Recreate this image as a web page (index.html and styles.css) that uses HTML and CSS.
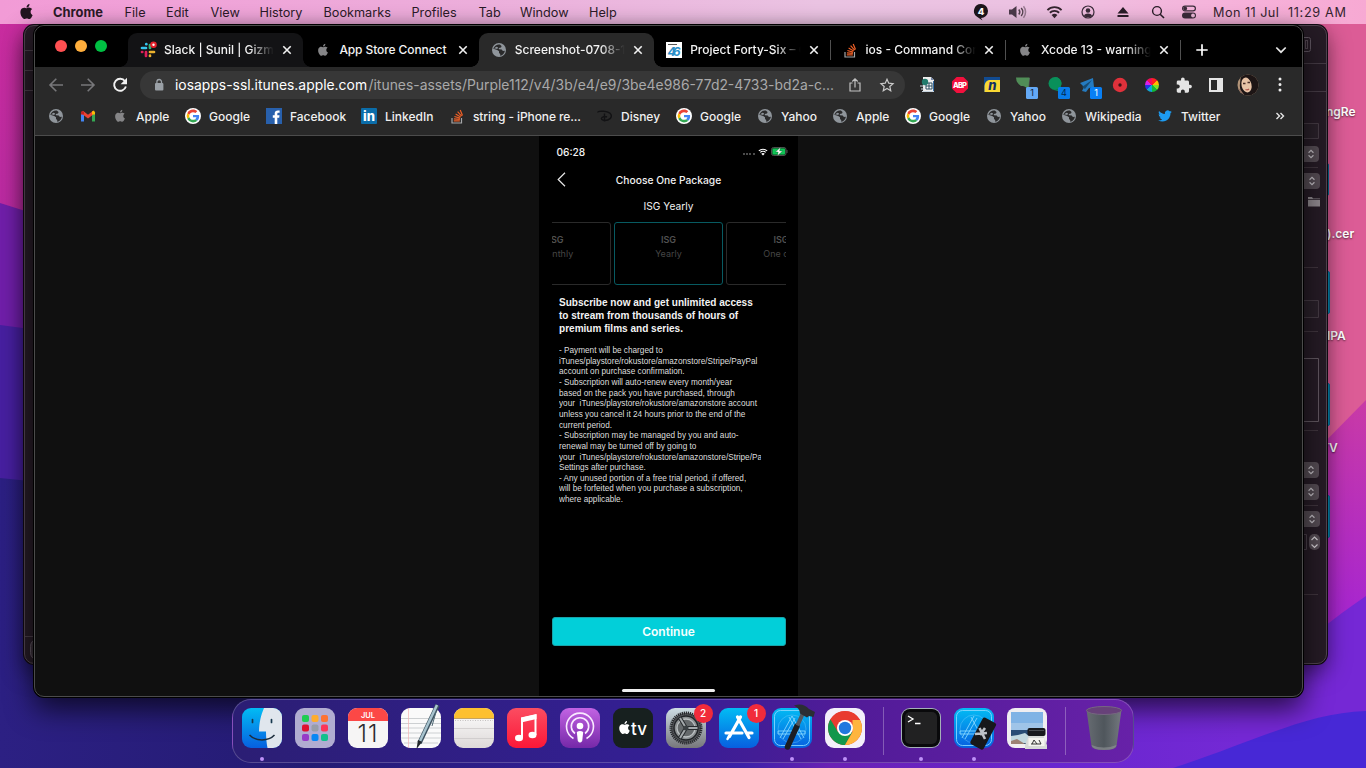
FILE: index.html
```html
<!DOCTYPE html>
<html lang="en">
<head>
<meta charset="utf-8">
<title>Desktop</title>
<link rel="stylesheet" href="styles.css">
</head>
<body>
<svg class="defs" width="0" height="0">
  <defs>
    <linearGradient id="wl" x1="0" y1="0" x2="0" y2="1"><stop offset="0" stop-color="#cb2d9f"/><stop offset="1" stop-color="#8a25a4"/></linearGradient>
    <linearGradient id="wr" x1="0" y1="0" x2="0" y2="1"><stop offset="0" stop-color="#c93aa6"/><stop offset=".55" stop-color="#a927cd"/><stop offset="1" stop-color="#8f25dc"/></linearGradient>
    <linearGradient id="wb" x1="0" y1="0" x2="1" y2="0"><stop offset="0" stop-color="#2c2083"/><stop offset=".25" stop-color="#241b73"/><stop offset=".6" stop-color="#3c21a8"/><stop offset=".67" stop-color="#6a21b4"/><stop offset=".85" stop-color="#6926cf"/><stop offset="1" stop-color="#7429d5"/></linearGradient>
    <linearGradient id="blueApp" x1="0" y1="0" x2="0" y2="1"><stop offset="0" stop-color="#02bcf4"/><stop offset="1" stop-color="#075fe0"/></linearGradient>
    <linearGradient id="redApp" x1="0" y1="0" x2="0" y2="1"><stop offset="0" stop-color="#fb4d61"/><stop offset="1" stop-color="#fc1738"/></linearGradient>
    <linearGradient id="purpleApp" x1="0" y1="0" x2="0" y2="1"><stop offset="0" stop-color="#c263e3"/><stop offset="1" stop-color="#7528a8"/></linearGradient>
    <linearGradient id="greyApp" x1="0" y1="0" x2="0" y2="1"><stop offset="0" stop-color="#cddde4"/><stop offset="1" stop-color="#77777b"/></linearGradient>
    <linearGradient id="paper" x1="0" y1="0" x2="0" y2="1"><stop offset="0" stop-color="#fff"/><stop offset="1" stop-color="#ddd9d8"/></linearGradient>
    <linearGradient id="bin" x1="0" y1="0" x2="1" y2="0"><stop offset="0" stop-color="#676c72"/><stop offset=".5" stop-color="#4f565c"/><stop offset="1" stop-color="#73787e"/></linearGradient>
    <symbol id="apple" viewBox="0 0 24 24"><path fill="currentColor" d="M12.152 6.896c-.948 0-2.415-1.078-3.96-1.04-2.04.027-3.91 1.183-4.961 3.014-2.117 3.675-.546 9.103 1.519 12.09 1.013 1.454 2.208 3.09 3.792 3.039 1.52-.065 2.09-.987 3.935-.987 1.831 0 2.35.987 3.96.948 1.637-.026 2.676-1.48 3.676-2.948 1.156-1.688 1.636-3.325 1.662-3.415-.039-.013-3.182-1.221-3.22-4.857-.026-3.04 2.48-4.494 2.597-4.559-1.429-2.09-3.623-2.324-4.39-2.376-2-.156-3.675 1.09-4.61 1.09zM15.53 3.83c.843-1.012 1.4-2.427 1.245-3.83-1.207.052-2.662.805-3.532 1.818-.78.896-1.454 2.338-1.273 3.714 1.338.104 2.715-.688 3.559-1.701"/></symbol>
    <symbol id="globe" viewBox="0 0 16 16"><circle cx="8" cy="8" r="7" fill="#8f959b"/><path fill="#2a2a2b" d="M8.800 2.600 10.600 4 10 5.600 7.700 6.100 8 7.300l2.700.2 1.200 1.500 2-.2c-.3 2.600-2.200 4.600-4.700 5V12l-1.200-1L8 9.300 6.200 8 2.300 6.800A5.800 5.800 0 0 1 8.800 2.600z"/><path fill="#8f959b" d="M3 6.300 5.500 4.800l1.500.5L6.300 7z"/></symbol>
    <symbol id="google" viewBox="-6 -6 60 60"><circle cx="24" cy="24" r="30" fill="#fff"/><path fill="#EA4335" d="M24 9.500c3.540 0 6.710 1.220 9.210 3.600l6.850-6.850C35.900 2.380 30.470 0 24 0 14.620 0 6.510 5.380 2.560 13.220l7.980 6.190C12.430 13.720 17.740 9.500 24 9.500z"/><path fill="#4285F4" d="M46.980 24.550c0-1.570-.15-3.090-.38-4.550H24v9.020h12.940c-.58 2.960-2.260 5.480-4.780 7.180l7.730 6c4.510-4.180 7.090-10.360 7.090-17.650z"/><path fill="#FBBC05" d="M10.530 28.590A14.500 14.500 0 0 1 10.530 19.410L2.560 13.220A24 24 0 0 0 2.560 34.780z"/><path fill="#34A853" d="M24 48c6.480 0 11.930-2.130 15.890-5.810l-7.730-6c-2.150 1.450-4.920 2.300-8.160 2.300-6.260 0-11.570-4.220-13.470-9.910l-7.970 6.190C6.510 42.620 14.620 48 24 48z"/></symbol>
    <symbol id="stack" viewBox="0 0 16 16"><path d="M3 10v5h9.500v-5" fill="none" stroke="#a6a7a9" stroke-width="1.200"/><path d="M4.800 12.800h6M4.900 10.800l6 .6M5.400 8.500l5.700 1.600M6.600 6l5.100 3M8.600 3.600l4 4.500M11.200 2l2.300 5.400" stroke="#ee5f26" stroke-width="1.200" fill="none"/></symbol>
    <symbol id="close" viewBox="0 0 10 10"><path d="m1.300 1.300 7.400 7.400m0-7.400L1.300 8.700" stroke="#f1f1f1" stroke-width="1.600"/></symbol>
    <symbol id="updown" viewBox="0 0 10 12"><path d="m2.300 4.600 2.700-2.700 2.700 2.700M2.300 7.400 5 10.100l2.700-2.700" fill="none" stroke="#c4bfc5" stroke-width="1.300"/></symbol>
    <symbol id="wifi" viewBox="0 0 18 14"><path d="M1.500 5a10.600 10.600 0 0 1 15 0M4.100 7.800a7 7 0 0 1 9.800 0" fill="none" stroke="currentColor" stroke-width="1.900"/><path d="M9 13.500 5.900 10.300a4.400 4.400 0 0 1 6.200 0z" fill="currentColor"/></symbol>
  </defs>
</svg>

<div class="desktop">
  <svg class="wallpaper" viewBox="0 0 1366 768">
    <rect width="1366" height="768" fill="#dc5c96"/>
    <path d="M0 0h700v768H0z" fill="url(#wl)"/>
    <path d="M0 203 60 222v546H0z" fill="#701fa9"/>
    <path d="M0 325 60 333v435H0z" fill="#4720a0"/>
    <path d="M1366 400 1240 528v240h126z" fill="url(#wr)"/>
    <path d="M1366 596C1300 640 1250 700 1140 720v48h226z" fill="#7528d5"/>
    <path d="M0 478 60 484v180h1180v104H0z" fill="url(#wb)"/>
    <path d="M1366 711c-60 2-110 30-193 57h193z" fill="#4728d6"/>
  </svg>

  <div class="file-label f1">ngRe</div>
  <div class="file-label f2">).cer</div>
  <div class="file-label f3">IPA</div>
  <div class="file-label f4">TV</div>
  <div class="file-icon dim i1"></div>
  <div class="file-icon i2"></div>
  <div class="file-icon i3"></div>
  <div class="file-icon i4"></div>

  <header class="menubar">
    <nav class="menus">
      <svg class="apple-menu"><use href="#apple"/></svg>
      <b>Chrome</b><span>File</span><span>Edit</span><span>View</span><span>History</span><span>Bookmarks</span><span>Profiles</span><span>Tab</span><span>Window</span><span>Help</span>
    </nav>
    <div class="status">
      <svg width="16" height="18" viewBox="0 0 16 18"><path d="M8 1a7 7 0 1 1 0 14l1.500 2.500L4 13.800A7 7 0 0 1 8 1z" fill="#1e171d"/><text x="8" y="11.500" text-anchor="middle" class="icon-text bold" font-size="9.500" fill="#fff">4</text></svg>
      <svg width="20" height="16" viewBox="0 0 20 16"><path d="M1 5.500h3L8.500 2v12L4 10.500H1z" fill="#4c3a4a"/><path d="M10.800 5.500a4 4 0 0 1 0 5M13.200 4a6 6 0 0 1 0 8" stroke="#55434f" stroke-width="1.500" fill="none"/><path d="M15.500 2.300a9 9 0 0 1 0 11.400" stroke="#9b7c93" stroke-width="1.500" fill="none"/></svg>
      <svg width="17" height="14"><use href="#wifi"/></svg>
      <svg width="14" height="14" viewBox="0 0 14 14"><circle cx="7" cy="7" r="6" fill="none" stroke="#3c2c3b" stroke-width="1.200"/><circle cx="7" cy="5.500" r="2.300" fill="#3c2c3b"/><path d="M3 10.700c1-3 7-3 8 0-2 2-6 2-8 0z" fill="#3c2c3b"/></svg>
      <svg width="12" height="12" viewBox="0 0 12 12"><path d="M6 1 11.500 7.500H.5zM.5 9h11v2H.5z" fill="#2a1e29"/></svg>
      <svg width="14" height="14" viewBox="0 0 14 14"><circle cx="6" cy="6" r="4.400" fill="none" stroke="#2a1e29" stroke-width="1.400"/><path d="m9.200 9.200 3.800 3.800" stroke="#2a1e29" stroke-width="1.600"/></svg>
      <svg width="16" height="14" viewBox="0 0 16 14"><rect x="1.600" y="1.100" width="12.800" height="4.800" rx="2.400" fill="none" stroke="#3c2c3b" stroke-width="1.200"/><circle cx="4.200" cy="3.500" r="1.900" fill="#3c2c3b"/><rect x="1" y="7.500" width="14" height="6" rx="3" fill="#3c2c3b"/><circle cx="12" cy="10.500" r="1.900" fill="#edbada"/></svg>
      <span class="date">Mon 11 Jul</span><span class="time">11:29 AM</span>
    </div>
  </header>

  <section class="window back-window">
    <svg class="inspector" width="1301" height="638" viewBox="0 0 1301 638">
      <path d="M0 25.500h10M0 45.500h10M0 65.500h10M0 611.500h10" stroke="#463b46"/>
      <rect x="5.500" y="614.500" width="12" height="20" rx="7" fill="#382f38" stroke="#5b515b"/>
      <path d="M1277 38.500h24M1277 66.500h24" stroke="#443a44"/>
      <rect x="1273" y="12.500" width="12.500" height="14" rx="2" fill="none" stroke="#5e545f"/><rect x="1280.500" y="15.500" width="2" height="8" fill="none" stroke="#51464f"/>
      <path d="M1277 98.500h16.500v15H1277M1277 275.500h16.500v17H1277" fill="#292029" stroke="#443a43"/>
      <path d="M1277 333.500h16.500v63H1277" fill="none" stroke="#60565f"/>
      <path d="M1277 142.500h16M1277 242.500h16M1277 306.500h16M1277 405.500h16M1277 480.500h16M1277 569.500h16" stroke="#3f343d"/>
      <g fill="#544b53"><rect x="1265" y="121" width="29" height="16" rx="4"/><rect x="1265" y="148" width="30" height="16" rx="4"/><rect x="1265" y="437" width="29" height="16" rx="4"/><rect x="1265" y="459" width="29" height="16" rx="4"/><rect x="1265" y="486" width="30" height="16" rx="4"/><rect x="1284" y="509" width="11" height="16" rx="5"/></g>
      <use href="#updown" x="1281.500" y="123.500" width="9" height="11"/><use href="#updown" x="1282.500" y="150.500" width="9" height="11"/><use href="#updown" x="1281.500" y="439.500" width="9" height="11"/><use href="#updown" x="1281.500" y="461.500" width="9" height="11"/><use href="#updown" x="1282.500" y="488.500" width="9" height="11"/>
      <path d="m1286.500 515 3-3 3 3m-6 4.500 3 3 3-3" fill="none" stroke="#d5d0d5" stroke-width="1.200"/><path d="M1278 509.500h3.500v15h-4" fill="none" stroke="#4a404a"/>
      <path d="M1283 172h4l1 1.500h7v8h-12z" fill="#8d868c"/><path d="M1283 174.500h12" stroke="#3b323b"/>
    </svg>
  </section>

  <main class="window browser">
    <div class="tabstrip">
      <div class="lights"><i class="red"></i><i class="amber"></i><i class="green"></i></div>
      <div class="tab hover">
        <svg viewBox="0 0 16 16"><g stroke-width="2.700" stroke-linecap="round"><path d="M2 6h4" stroke="#36c5f0"/><path d="M6.300 2v.2" stroke="#36c5f0"/><path d="M10 3v3" stroke="#2eb67d"/><path d="M10 10h4" stroke="#ecb22e"/><path d="M10 14v-.3" stroke="#ecb22e"/><path d="M6 10v4M2 10h.3" stroke="#e01e5a"/></g><circle cx="13.500" cy="2.800" r="3.300" fill="#e5202b"/><circle cx="13.500" cy="2.800" r="1.200" fill="#fff"/></svg>
        <span>Slack | Sunil | Gizmeon</span><svg class="x"><use href="#close"/></svg></div>
      <div class="tab"><svg class="grey"><use href="#apple" x="2" y="1.500" width="12" height="12.500"/></svg><span class="whole">App Store Connect</span><svg class="x"><use href="#close"/></svg></div>
      <div class="tab active"><svg><use href="#globe"/></svg><span>Screenshot-0708-142</span><svg class="x"><use href="#close"/></svg></div>
      <div class="tab"><svg viewBox="0 0 16 16"><path d="M0 0h16v16H0z" fill="#fff"/><text x="8" y="13.500" text-anchor="middle" class="icon-text" font-size="12" font-style="italic" font-weight="700" fill="#2c8fc9" textLength="13">46</text><path d="M2 2.500h9" stroke="#555"/></svg><span>Project Forty-Six – Core</span><svg class="x"><use href="#close"/></svg></div>
      <div class="tab divided"><svg><use href="#stack"/></svg><span>ios - Command Compile</span><svg class="x"><use href="#close"/></svg></div>
      <div class="tab divided"><svg class="grey"><use href="#apple" x="2" y="1.500" width="12" height="12.500"/></svg><span>Xcode 13 - warning: a</span><svg class="x"><use href="#close"/></svg></div>
      <div class="newtab"><svg width="12" height="12" viewBox="0 0 12 12"><path d="M6 .3v11.400M.3 6h11.400" stroke="#fff" stroke-width="1.700"/></svg></div>
      <svg class="chev" width="12" height="8" viewBox="0 0 12 8"><path d="m1.300 1.500 4.700 4.700 4.700-4.700" fill="none" stroke="#e8e8e8" stroke-width="1.700"/></svg>
    </div>

    <div class="toolbar">
      <div class="nav">
        <svg viewBox="0 0 16 16"><path d="M15 8H2m6.300-6.300L2 8l6.300 6.300" fill="none" stroke="#77777a" stroke-width="1.600"/></svg>
        <svg viewBox="0 0 16 16"><path d="M1 8h13M7.700 1.700 14 8l-6.300 6.300" fill="none" stroke="#77777a" stroke-width="1.600"/></svg>
        <svg viewBox="0 0 16 16"><path d="M13 4.200A6 6 0 1 0 13.900 9.500" fill="none" stroke="#f0f0f0" stroke-width="1.900"/><path d="M15 .8v6.400H8.600z" fill="#f0f0f0"/></svg>
      </div>
      <div class="omnibox">
        <svg class="lock" width="10" height="14" viewBox="0 0 10 14"><rect x="1" y="5" width="8.400" height="7.500" rx="1" fill="#9aa0a6"/><path d="M2.900 5.500V3.800a2.300 2.300 0 0 1 4.600 0v1.700" fill="none" stroke="#9aa0a6" stroke-width="1.300"/></svg>
        <div class="url"><span class="host">iosapps-ssl.itunes.apple.com</span><span class="path">/itunes-assets/Purple112/v4/3b/e4/e9/3be4e986-77d2-4733-bd2a-c...</span></div>
        <svg class="share" width="14" height="16" viewBox="0 0 14 16"><path d="M4.500 6H2v8h10V6H9.500M7 10.500V2M4.300 4.500 7 1.800l2.700 2.700" fill="none" stroke="#c2c2c2" stroke-width="1.200"/></svg>
        <svg class="star" width="14" height="14" viewBox="0 0 14 14"><path d="m7 1.200 1.750 4 4.300.4-3.250 2.850.95 4.250L7 10.450 3.250 12.700l.95-4.250L.95 5.600l4.300-.4z" fill="none" stroke="#c9c9c9" stroke-width="1.200"/></svg>
      </div>
      <div class="extensions">
        <svg viewBox="0 0 24 24"><path d="M7 4h8l3 3v12H7z" fill="#eee"/><path d="M15 4v3h3" fill="#78a"/><path d="M10 10h6v6h-6zM13 10v6M10 13h6" fill="#fff" stroke="#294a5d"/><circle cx="9" cy="9" r="3.200" fill="#227b6d"/><path d="M4 13h4M5 16h3M6 18.500h12" stroke="#c7d3dd"/><path d="M17.500 8v10" stroke="#346ba3"/></svg>
        <svg viewBox="0 0 24 24"><path d="M8.600 4h6.800L20 8.600v6.800L15.400 20H8.600L4 15.400V8.600z" fill="#f2103d"/><text x="12" y="14.800" text-anchor="middle" font-size="7.500" class="icon-text bold" fill="#fff" textLength="14">ABP</text></svg>
        <svg viewBox="0 0 24 24"><path d="M4 4h16v15H4z" fill="#f9d833"/><path d="M4 4h16v3H9Q5 8 4.500 13v6H4z" fill="#114b91"/><text x="12.500" y="17" text-anchor="middle" font-size="13" class="icon-text bold" font-style="italic" fill="#132f66">n</text></svg>
        <svg viewBox="0 0 24 24"><path d="M4 5h14L17 17C16 12 12 7 4 5z" fill="#55585a"/><path d="M4 4.500h13.500L16 18C15 13 11 13 9 13Q4 10 4 4.500z" fill="#508d57"/><rect x="14" y="14" width="12" height="12" rx="1.500" fill="#64a9f5"/><text x="20" y="23" text-anchor="middle" font-size="9" class="icon-text" fill="#123">1</text></svg>
        <svg viewBox="0 0 24 24"><path d="M11 4a6.500 6.500 0 1 1-2 12.700L14 18l2 3-1-7z" fill="#09905a"/><circle cx="11" cy="10.500" r="6.500" fill="#09905a"/><rect x="14" y="14" width="12" height="12" rx="1.500" fill="#087ce9"/><text x="20" y="23" text-anchor="middle" font-size="9" class="icon-text" fill="#03294e">4</text></svg>
        <svg viewBox="0 0 24 24"><path d="M4 10 17 5l1 9-5 1-3 4-4-1 2-4z" fill="#257bc0"/><path d="m6 14 10-7-7 9z" fill="#174b72"/><rect x="14" y="14" width="12" height="12" rx="1.500" fill="#087ff4"/><text x="20" y="23" text-anchor="middle" font-size="9" class="icon-text" fill="#fff">1</text></svg>
        <svg viewBox="0 0 24 24"><circle cx="12" cy="12" r="7.200" fill="#e0313b"/><circle cx="12" cy="12" r="1.700" fill="#421116"/></svg>
        <div class="wheel-wrap"><i class="wheel"></i></div>
        <svg viewBox="0 0 24 24"><path transform="translate(3.300 3.800) scale(.72)" fill="#e4e4e4" d="M20.500 11H19V7c0-1.100-.9-2-2-2h-4V3.500C13 2.120 11.880 1 10.500 1S8 2.120 8 3.500V5H4c-1.100 0-1.990.9-1.990 2v3.800H3.500c1.490 0 2.700 1.210 2.700 2.700s-1.210 2.700-2.700 2.700H2V20c0 1.100.9 2 2 2h3.800v-1.500c0-1.490 1.210-2.700 2.700-2.700s2.700 1.210 2.700 2.700V22H17c1.100 0 2-.9 2-2v-4h1.500c1.380 0 2.500-1.120 2.500-2.500S21.880 11 20.500 11z"/></svg>
        <svg viewBox="0 0 24 24"><path d="M6 6h12v12H6z" fill="none" stroke="#e4e4e4" stroke-width="2"/><path d="M13 6h5v12h-5z" fill="#e4e4e4"/></svg>
        <svg viewBox="0 0 24 24"><clipPath id="av"><circle cx="12" cy="12" r="10.500"/></clipPath><g clip-path="url(#av)"><path d="M0 0h24v24H0z" fill="#b29478"/><path d="M5 0h19v24H3c4-5 0-8 1-13z" fill="#1d1515"/><ellipse cx="10.500" cy="12" rx="5" ry="7.500" fill="#e8c3a6" transform="rotate(-14 10.500 12)"/><path d="M7 10.500h2.500M11.500 9.500h2.500" stroke="#4a2f28" stroke-width="1.300"/><path d="M9.500 16.500q2 .8 3.500-.5" stroke="#b0584f" stroke-width="1.200" fill="none"/><path d="M0 15c5 0 6 5 10 9H0z" fill="#927161"/></g></svg>
        <svg viewBox="0 0 24 24"><path d="M12 6v.1M12 11.500v.1M12 17v.1" stroke="#ededed" stroke-width="3" stroke-linecap="round"/></svg>
      </div>
    </div>

    <nav class="bookmarks">
      <a><svg><use href="#globe"/></svg></a>
      <a><svg viewBox="0 0 16 16"><path d="M2.500 13.500V4.500" stroke="#4285f4" stroke-width="3"/><path d="M13.500 13.500V4.500" stroke="#34a853" stroke-width="3"/><path d="m2 4 6 4.700L14 4" fill="none" stroke="#ea4335" stroke-width="3"/><path d="M12 5.800V3.500L14 2.500l1 2v2h-3z" fill="#fbbc04"/><path d="M1 3.500v3h3v-3z" fill="#c5221f"/></svg></a>
      <a><svg class="grey"><use href="#apple" x="2" y="1.500" width="12" height="12.500"/></svg>Apple</a>
      <a><svg><use href="#google"/></svg>Google</a>
      <a><svg viewBox="0 0 16 16"><path d="M0 0h16v16H0z" fill="#2860ac"/><path d="M8.700 16V9.800H6.800V7.300h1.900V5.500C8.700 3.500 9.900 2.500 12 2.500h1.600v2.300h-1.100c-.9 0-1.200.4-1.200 1.200v1.300h2.200l-.3 2.500h-1.900V16z" fill="#fff"/></svg>Facebook</a>
      <a><svg viewBox="0 0 16 16"><rect width="16" height="16" rx="1" fill="#0b6da9"/><text x="8" y="13" text-anchor="middle" class="icon-text bold" font-size="13" fill="#fff" textLength="12">in</text></svg>LinkedIn</a>
      <a class="tight"><svg><use href="#stack"/></svg>string - iPhone re...</a>
      <a><svg viewBox="0 0 16 16"><path d="M1 4.500c-1-2 11-2 13 2 1.500 3-2 6-6 6-3 0-4.500-1.500-3-3 1.500-1 4-1 5-.5M7.500 5.500v8" fill="none" stroke="#121214" stroke-width="1.400"/></svg>Disney</a>
      <a><svg><use href="#google"/></svg>Google</a>
      <a><svg><use href="#globe"/></svg>Yahoo</a>
      <a><svg><use href="#globe"/></svg>Apple</a>
      <a><svg><use href="#google"/></svg>Google</a>
      <a><svg><use href="#globe"/></svg>Yahoo</a>
      <a><svg><use href="#globe"/></svg>Wikipedia</a>
      <a><svg viewBox="-2 -2 28 28"><path fill="#1d9bf0" d="M23.953 4.570a10 10 0 01-2.825.775 4.958 4.958 0 002.163-2.723c-.951.555-2.005.959-3.127 1.184a4.920 4.920 0 00-8.384 4.482C7.690 8.095 4.067 6.130 1.640 3.162a4.822 4.822 0 00-.666 2.475c0 1.710.870 3.213 2.188 4.096a4.904 4.904 0 01-2.228-.616v.060a4.923 4.923 0 003.946 4.827 4.996 4.996 0 01-2.212.085 4.936 4.936 0 004.604 3.417 9.867 9.867 0 01-6.102 2.105c-.390 0-.779-.023-1.170-.067a13.995 13.995 0 007.557 2.209c9.053 0 13.998-7.496 13.998-13.985 0-.210 0-.420-.015-.630A9.935 9.935 0 0024 4.590z"/></svg>Twitter</a>
      <svg class="more" viewBox="0 0 16 16"><path d="m4.500 5 3 3-3 3M8.500 5l3 3-3 3" fill="none" stroke="#e6e6e6" stroke-width="1.400"/></svg>
    </nav>

    <div class="page">
      <article class="phone">
        <div class="phone-status"><span>06:28</span>
          <div class="signals"><i class="dots"></i><svg width="10" height="8"><use href="#wifi"/></svg>
          <svg width="17" height="9" viewBox="0 0 17 9"><rect x=".5" y=".5" width="14.500" height="8" rx="2" fill="#133a20" stroke="#4a4d4b"/><rect x="1.500" y="1.500" width="12.500" height="6" rx="1" fill="#0fc455"/><path d="M16 3v3" stroke="#555"/><path d="M9.500.3 4.500 5h2.700L6.500 8.700 11.500 4H8.600z" fill="#fff" stroke="#083a18" stroke-width=".3"/></svg></div>
        </div>
        <div class="phone-title"><svg width="9" height="15" viewBox="0 0 9 15"><path d="M8 .8 1.200 7.500 8 14.200" fill="none" stroke="#e8e8e8" stroke-width="1.200"/></svg><h1>Choose One Package</h1></div>
        <h2>ISG Yearly</h2>
        <div class="plans">
          <div class="plan"><b>ISG</b><span>Monthly</span></div>
          <div class="plan selected"><b>ISG</b><span>Yearly</span></div>
          <div class="plan"><b>ISG</b><span>One day</span></div>
        </div>
        <h3>Subscribe now and get unlimited access<br>to stream from thousands of hours of<br>premium films and series.</h3>
        <p class="terms">- Payment will be charged to
iTunes/playstore/rokustore/amazonstore/Stripe/PayPal
account on purchase confirmation.
- Subscription will auto-renew every month/year
based on the pack you have purchased, through
your  iTunes/playstore/rokustore/amazonstore account
unless you cancel it 24 hours prior to the end of the
current period.
- Subscription may be managed by you and auto-
renewal may be turned off by going to
your  iTunes/playstore/rokustore/amazonstore/Stripe/PayPal
Settings after purchase.
- Any unused portion of a free trial period, if offered,
will be forfeited when you purchase a subscription,
where applicable.</p>
        <button class="continue">Continue</button>
        <div class="home"></div>
      </article>
    </div>
  </main>

  <footer class="dock">
    <div class="app running"><svg viewBox="0 0 40 40"><clipPath id="r"><rect width="40" height="40" rx="9"/></clipPath><g clip-path="url(#r)"><path d="M0 0h40v40H0z" fill="url(#blueApp)"/><path d="M22 0h18v40H25.500c-1-5-1.500-10-1.500-16.500h-7C17.300 14 19 7 22 0z" fill="#e0e6ed"/></g><path d="M10.500 11.500v3M29.500 11.500v3" stroke="#16384e" stroke-width="1.700" stroke-linecap="round"/><path d="M7.500 27c6 6.500 19 6.500 25 0" fill="none" stroke="#1c2c3b" stroke-width="1.500"/></svg></div>
    <div class="app"><svg viewBox="0 0 40 40"><rect width="40" height="40" rx="9" fill="#b1acd1"/><g><rect x="7" y="7" width="7" height="7" rx="2" fill="#1fcd52"/><rect x="16.500" y="7" width="7" height="7" rx="2" fill="#ffac2f"/><rect x="26" y="7" width="7" height="7" rx="2" fill="#fd7332"/><rect x="7" y="16.500" width="7" height="7" rx="2" fill="#df1030"/><rect x="16.500" y="16.500" width="7" height="7" rx="2" fill="#989daa"/><rect x="26" y="16.500" width="7" height="7" rx="2" fill="#fb3659"/><rect x="7" y="26" width="7" height="7" rx="2" fill="#963bc8"/><rect x="16.500" y="26" width="7" height="7" rx="2" fill="#0987f4"/><rect x="26" y="26" width="7" height="7" rx="2" fill="#11c08c"/></g></svg></div>
    <div class="app"><svg viewBox="0 0 40 40"><rect width="40" height="40" rx="9" fill="#f6f5f5"/><path d="M0 13V9a9 9 0 0 1 9-9h22a9 9 0 0 1 9 9v4z" fill="#fc4846"/><text x="20" y="9.500" text-anchor="middle" class="icon-text semi" font-size="7.500" fill="#fff" textLength="14">JUL</text><text x="19.500" y="33.500" text-anchor="middle" class="icon-text light" font-size="24" fill="#2d2d2f" textLength="20">11</text></svg></div>
    <div class="app"><svg viewBox="0 0 40 40"><rect width="40" height="40" rx="9" fill="#fafafa"/><path d="M0 10.500h40M0 15.500h40M0 20h40M0 25h40M0 30h40M3 35h34" stroke="#c1c5c8" stroke-width=".8"/><path d="M7.500 0v40" stroke="#f2b5b5" stroke-width=".7"/><path d="M36.500-3 18.500 35" stroke="#3e5361" stroke-width="4.500"/><path d="M36-3 19 33" stroke="#a8c4cf" stroke-width="2.500"/><path d="m17 32-1.500 9 5.500-7z" fill="#22272b"/><path d="M35 4 31 18" stroke="#4e6874"/></svg></div>
    <div class="app"><svg viewBox="0 0 40 40"><rect width="40" height="40" rx="9" fill="url(#paper)"/><path d="M0 10V9a9 9 0 0 1 9-9h22a9 9 0 0 1 9 9v1z" fill="#fdc030"/><path d="M0 10.500h40" stroke="#c6a45f"/><path d="M1 12.500h38" stroke="#a3a0a0" stroke-dasharray="1 1.500" stroke-width=".6"/><path d="M0 20.500h40M0 30.500h40" stroke="#c8c5c5" stroke-width=".7"/></svg></div>
    <div class="app"><svg viewBox="0 0 40 40"><rect width="40" height="40" rx="9" fill="url(#redApp)"/><path d="M15 30V10.500l13.500-3V27" fill="none" stroke="#fff" stroke-width="2"/><path d="m14 9.500 15.500-3.500v5L14 14.500z" fill="#fff"/><ellipse cx="12" cy="30" rx="4" ry="3.200" fill="#fff"/><ellipse cx="25.500" cy="27" rx="4" ry="3.200" fill="#fff"/></svg></div>
    <div class="app"><svg viewBox="0 0 40 40"><rect width="40" height="40" rx="9" fill="url(#purpleApp)"/><g fill="none" stroke="#f9eaff" stroke-width="1.600"><path d="M13.500 30.500a13.500 13.500 0 1 1 13 0"/><path d="M15 25.500a8.700 8.700 0 1 1 10 0"/></g><circle cx="20" cy="18" r="3.300" fill="#fff"/><path d="M16.800 24q3.200-2 6.400 0l-1 9q-2.200 3-4.400 0z" fill="#fff"/></svg></div>
    <div class="app"><svg viewBox="0 0 40 40"><rect width="40" height="40" rx="9" fill="#17201f"/><use href="#apple" x="5" y="12.500" width="13" height="14" color="#fff"/><text x="18" y="26.500" class="icon-text medium" font-size="17" fill="#fff" textLength="16">tv</text></svg></div>
    <div class="app"><svg viewBox="0 0 40 40"><rect width="40" height="40" rx="9" fill="url(#greyApp)"/><circle cx="20" cy="20" r="15" fill="#585a5e" stroke="#26282b" stroke-width="3" stroke-dasharray="1.200 .8"/><circle cx="20" cy="20" r="12" fill="#8c9092" stroke="#222528" stroke-width="1.500"/><circle cx="20" cy="20" r="9" fill="#65696b" stroke="#bbc0c2" stroke-width="1.300"/><path d="m20 20 11.500 0M20 20l-6-10M20 20l-6 10" stroke="#282b2e" stroke-width="4"/><path d="m20 20 11.500 0M20 20l-6-10M20 20l-6 10" stroke="#a4a9ab" stroke-width="2"/><circle cx="20" cy="20" r="2.500" fill="#3b4043"/></svg><em class="badge">2</em></div>
    <div class="app"><svg viewBox="0 0 40 40"><rect width="40" height="40" rx="9" fill="url(#blueApp)"/><path d="m21.500 9-11 19.500M18.500 9l11.500 20.500M7 25h16M28 25h5" stroke="#fff" stroke-width="3.200" stroke-linecap="round"/><path d="m10 28-1.500 3" stroke="#fff" stroke-width="2.500" stroke-linecap="round"/></svg><em class="badge">1</em></div>
    <div class="app running"><svg viewBox="0 0 40 40"><rect width="40" height="40" rx="9" fill="url(#blueApp)"/><g fill="none" stroke="#83d6ff" stroke-width=".9"><rect x="2.500" y="2.500" width="35" height="35" rx="6"/><circle cx="20" cy="21" r="14" stroke-opacity=".4"/><path d="m20 8-12 22m3 1L23 10M17 9l12 22m3-1L20 8M6 23h27v3H6z"/></g><path d="m25 18-9.500 21" stroke="#1c1d22" stroke-width="5.500" stroke-linecap="round"/><path d="m31.500 4-6 13.500" stroke="#53575e" stroke-width="4"/><path d="M22-2.500c7-2 11-.5 15 3.500l6 3-1.500 5-4.500-1-2 1.500-7-4Q28 .5 22-2.500z" fill="#2b2e34"/></svg></div>
    <div class="app running"><svg viewBox="0 0 40 40"><rect width="40" height="40" rx="9" fill="#f3effa"/><circle cx="20" cy="20" r="17" fill="#e93b30"/><path d="M5.300 11.500A17 17 0 0 0 20 37l7.400-12.800L20 20z" fill="#12974c"/><path d="M37 20a17 17 0 0 1-17 17l7.500-13V12H35a17 17 0 0 1 2 8z" fill="#feb53e"/><path d="M5.500 11.500 13 24l7-12h15A17 17 0 0 0 5.500 11.500z" fill="#e93b30"/><circle cx="20" cy="20" r="8" fill="#fff"/><circle cx="20" cy="20" r="6.200" fill="#2178df"/></svg></div>
    <i class="divider"></i>
    <div class="app running"><svg viewBox="0 0 40 40"><rect width="40" height="40" rx="9" fill="#a4b0b8"/><rect x="1" y="1" width="38" height="38" rx="8" fill="#09090b"/><rect x="4" y="4" width="32" height="32" rx="5" fill="#212122"/><path d="m7 8 5 3-5 3M14 15.500h5.500" stroke="#fff" stroke-width="1.300" fill="none"/></svg></div>
    <div class="app running"><svg viewBox="0 0 40 40"><rect width="40" height="40" rx="9" fill="url(#blueApp)"/><g fill="none" stroke="#83d6ff" stroke-width=".9"><rect x="2.500" y="2.500" width="35" height="35" rx="6"/><circle cx="20" cy="21" r="14" stroke-opacity=".4"/><path d="m20 8-12 22m3 1L23 10M17 9l12 22M6 23h27v3H6z"/></g><rect x="21.500" y="10.500" width="15" height="30" rx="2" transform="rotate(28 29 26)" fill="#17181b"/><path d="m25.500 20 5.500 11M31 20l-5 7M21 26l12-1" stroke="#bdc1c7" stroke-width="2.600"/></svg></div>
    <div class="app"><svg viewBox="0 0 40 40"><rect width="40" height="40" rx="8" fill="#f0eef1"/><path d="M4 4h32v32H4z" fill="#80b3e5"/><path d="M4 15h32v7H4z" fill="#9fc4e8"/><path d="M4 22h32v14H4z" fill="#294d75"/><path d="m4 28 7-1 7-2 5 4v6H4z" fill="#c1d8df"/><path d="m4 33 6-2 8 5H4z" fill="#9c8273"/><path d="M22 26h14q1 4 4 11v4H18v-4q3-7 4-11z" fill="#d7dad7"/><path d="M21.500 30h16v8h-16z" fill="#f4f4ef"/><rect x="20.500" y="20" width="18" height="8" rx="2" fill="#17191c"/><path d="M22 22.500h15" stroke="#484c50"/><path d="m25 36 2-4 3 4m2-4 2 4M24 36h10" stroke="#333" fill="none"/></svg></div>
    <i class="divider"></i>
    <div class="app"><svg viewBox="0 0 40 40"><path d="M2.500 1.500 7.500 38Q8 42 20 42t12.500-4l5-36.500z" fill="url(#bin)"/><ellipse cx="20" cy="2.500" rx="17.500" ry="4" fill="#674179" stroke="#766681"/><path d="M7.500 37q12 5 25 0-.5 5-12.500 5T7.500 37z" fill="#92969a" opacity=".6"/></svg></div>
  </footer>
</div>
</body>
</html>
```

FILE: styles.css
```css
* { box-sizing: border-box; }
body { margin: 0; font-family: Inter, "Liberation Sans", sans-serif; }
h1, h2, h3, p { margin: 0; }
svg { display: block; flex: none; overflow: visible; }
.defs { position: absolute; }
.desktop { position: relative; width: 1366px; height: 768px; overflow: hidden; }
.wallpaper { position: absolute; inset: 0; }
.icon-text { font-family: Inter, sans-serif; }
.bold { font-weight: 800; }
.semi { font-weight: 600; }
.medium { font-weight: 500; }
.light { font-weight: 300; }

/* Menu bar */
.menubar { position: absolute; inset: 0 0 auto; height: 24px; display: flex; justify-content: space-between; color: #2b1b28; font-size: 12.7px; background: linear-gradient(90deg, #f29bd6, #ecaedb 35%, #eac3e2 60%, #ecc2e2 75%, #f6b2da 90%, #f7a9d3); }
.menus { display: grid; grid-template-columns: 34px 71.500px 41.500px 44.500px 49px 64px 88px 67px 41.500px 69px 40px; align-items: center; padding-left: 19px; white-space: nowrap; }
.menus b { font-size: 12.900px; }
.apple-menu { width: 15px; height: 15px; color: #23151f; margin-top: -2px; }
.status { display: flex; align-items: center; white-space: nowrap; padding-right: 19px; color: #35252f; }
.status svg { margin-right: 16px; }
.status svg:nth-child(1) { margin-right: 19px; }
.status svg:nth-child(2) { margin-right: 17.500px; }
.status svg:nth-child(3) { margin-right: 18px; }
.status svg:nth-child(4) { margin-right: 22px; }
.status svg:nth-child(5) { margin-right: 22.500px; }
.status .date { width: 75px; letter-spacing: .45px; }
.status .time { width: 59px; letter-spacing: .65px; }

/* Desktop files behind the windows */
.file-label { position: absolute; color: #fff; font-size: 12px; font-weight: 600; line-height: 16px; text-shadow: 0 1px 2px #0009; }
.f1 { left: 1326px; top: 104px; }
.f2 { left: 1327px; top: 226px; }
.f3 { left: 1327px; top: 328px; }
.f4 { left: 1321px; top: 440px; }
.file-icon { position: absolute; left: 1310px; width: 20px; height: 43px; border-radius: 2px; background: #078eb5; border: 1px solid #076f9a; }
.i1 { top: 163px; height: 33px; width: 19px; }
.i2 { top: 271px; }
.i3 { top: 383px; }
.i4 { top: 495px; }
.dim { background: #174878; }

/* Windows */
.window { position: absolute; overflow: hidden; border-radius: 10px; }
.back-window { left: 24px; top: 25px; width: 1303px; height: 639px; border: 1px solid #50434f; background: #251b25; box-shadow: 0 0 0 1px #100a12, 0 8px 22px #0008; }
.inspector { margin-top: -1px; }
.browser { left: 34px; top: 25px; width: 1269px; height: 672px; border: 1px solid #4b4b4b; background: #101010; box-shadow: 0 0 0 1px #000, 0 12px 28px #000a; }

.tabstrip { height: 41px; padding: 7px 15px 0 19px; background: #000; display: flex; align-items: flex-start; }
.lights { width: 74px; display: flex; gap: 8px; padding: 7px 0 0 1px; }
.lights i { width: 12px; height: 12px; border-radius: 50%; }
.red { background: #ff5052; }
.amber { background: #ffae3c; }
.green { background: #00c043; }
.tab { position: relative; width: 175.400px; height: 34px; padding: 0 11px 1px 12px; display: flex; align-items: center; color: #f3f3f3; font-size: 12px; font-weight: 500; }
.tab > svg:first-child { width: 16px; height: 16px; margin-right: 8px; }
.tab span { width: 114px; overflow: hidden; white-space: nowrap; mask-image: linear-gradient(90deg, #000 76%, transparent 98%); }
.tab .whole { mask-image: none; letter-spacing: -.1px; }
.tab .x { width: 10px; height: 10px; margin-left: 6px; }
.hover, .active { border-radius: 9px 9px 0 0; }
.hover { background: #131315; }
.active { background: #292929; }
.active::before, .active::after, .hover::before, .hover::after { content: ""; position: absolute; bottom: 0; width: 8px; height: 8px; }
.active::before, .hover::before { left: -8px; background: radial-gradient(circle at 0 0, transparent 7.500px, #292929 8px); }
.active::after, .hover::after { right: -8px; background: radial-gradient(circle at 100% 0, transparent 7.500px, #292929 8px); }
.hover::before { background: radial-gradient(circle at 0 0, transparent 7.500px, #131315 8px); }
.hover::after { background: radial-gradient(circle at 100% 0, transparent 7.500px, #131315 8px); }
.divided { background: linear-gradient(#505050, #505050) 0 50% / 1px 20px no-repeat; }
.newtab { height: 34px; padding-left: 16px; display: flex; align-items: center; background: linear-gradient(#505050, #505050) 0 50% / 1px 20px no-repeat; }
.chev { margin: 13px 0 0 auto; }
.grey { color: #858587; }

.toolbar { height: 37px; padding: 4px 10px 5px 13px; display: flex; align-items: center; background: #292929; }
.nav { width: 94px; display: flex; gap: 16px; }
.nav svg { width: 16px; height: 16px; }
.omnibox { width: 765px; height: 28px; border-radius: 14px; padding: 0 11px 0 14px; display: flex; align-items: center; background: #373737; }
.url { width: 669px; margin-left: 11px; font-size: 13.900px; white-space: nowrap; display: flex; }
.host { width: 193.500px; color: #fff; }
.path { color: #a9a9aa; }
.share { margin-left: 5px; }
.star { margin-left: 18px; }
.extensions { display: flex; gap: 8px; margin-left: 11px; }
.extensions svg, .wheel-wrap { width: 24px; height: 24px; flex: none; }
.wheel-wrap { display: grid; place-items: center; }
.wheel { width: 14px; height: 14px; border-radius: 50%; background: conic-gradient(#f22 0 45deg, #fb0 0 90deg, #7ee026 0 135deg, #13b838 0 180deg, #11a6d5 0 225deg, #2434e4 0 270deg, #d921ea 0 315deg, #f40b5b 0); }

.bookmarks { height: 32px; padding: 0 14px 7px 13px; background: #292929; border-bottom: 1px solid #4c4c4c; display: grid; grid-template-columns: 32px 32px 73px 81px 95px 88px 148px 79px 81px 75px 73px 81px 75px 96px 75px 1fr; align-items: center; color: #f0f0f0; font-size: 12px; font-weight: 500; white-space: nowrap; }
.bookmarks a { display: flex; align-items: center; gap: 8px; }
.bookmarks .tight { letter-spacing: -.1px; }
.bookmarks svg { width: 16px; height: 16px; }
.bookmarks .more { justify-self: end; }

/* App screenshot shown in the page */
.page { height: 560px; display: flex; justify-content: center; }
.phone { width: 259px; margin-right: 1px; background: #000; color: #f2f2f2; display: flex; flex-direction: column; padding: 0 12px 0 13px; }
.phone-status { height: 31px; padding: 0 0 0 5px; display: flex; align-items: center; justify-content: space-between; font-size: 10.200px; font-weight: 500; }
.signals { display: flex; align-items: center; gap: 3px; margin-right: -2px; }
.signals svg { color: #fff; }
.dots { width: 12px; height: 2px; margin-top: 5px; background: repeating-linear-gradient(90deg, #4b4b4b 0 2px, transparent 2px 3.200px); }
.phone-title { height: 26px; padding: 0 0 1px 5px; display: flex; align-items: center; }
.phone h1 { flex: 1; margin-right: 14px; text-align: center; font-size: 10.250px; font-weight: 500; }
.phone h2 { height: 29px; line-height: 27px; text-align: center; font-size: 10.200px; font-weight: 400; }
.plans { height: 63px; flex: none; display: flex; justify-content: center; gap: 3px; overflow: hidden; }
.plan { flex: none; width: 109.500px; border: 1px solid #2a2a2a; border-radius: 3px; display: flex; flex-direction: column; align-items: center; padding-top: 10px; font-size: 9px; line-height: 13.500px; color: #464646; }
.plan b { font-weight: 600; color: #515151; }
.selected { border-color: #075a61; }
.phone h3 { margin: 11px 0 0 7.500px; font: 700 10.050px/13.200px "Liberation Sans", Arial, sans-serif; white-space: nowrap; color: #f3f3f3; }
.terms { width: 202px; margin: 10.500px 0 0 7.500px; overflow: hidden; white-space: pre; font: 8.220px/10.640px "Liberation Sans", Arial, sans-serif; color: #dedede; }
.continue { height: 29px; margin-top: 111px; flex: none; border: 1px solid #18a4aa; border-radius: 3px; background: #02cfd9; color: #f6ffff; font: 600 12px Inter, sans-serif; }
.home { width: 93px; height: 3px; flex: none; margin: 43px auto 0; border-radius: 2px; background: #eee; }

/* Dock */
.dock { position: absolute; left: 232px; top: 699px; width: 902px; height: 64px; padding: 8px 9px 9px 8.500px; border: 1px solid #ffffff35; border-radius: 19px; background: linear-gradient(90deg, #2b1e74, #341f94 48%, #511b98 68%, #6721a8); display: flex; gap: 13px; }
.app { position: relative; width: 40px; height: 40px; flex: none; }
.app svg { width: 40px; height: 40px; }
.running::after { content: ""; position: absolute; left: 18px; top: 49px; width: 4px; height: 4px; border-radius: 50%; background: #be91f8; }
.badge { position: absolute; right: -7px; top: -4px; width: 19px; height: 19px; border-radius: 50%; background: #f12b3b; color: #fff; font: 500 10px/19px Inter, sans-serif; text-align: center; }
.divider { width: 1px; height: 48px; margin: -1px 4.500px 0 5px; background: #ffffff48; flex: none; }
```
